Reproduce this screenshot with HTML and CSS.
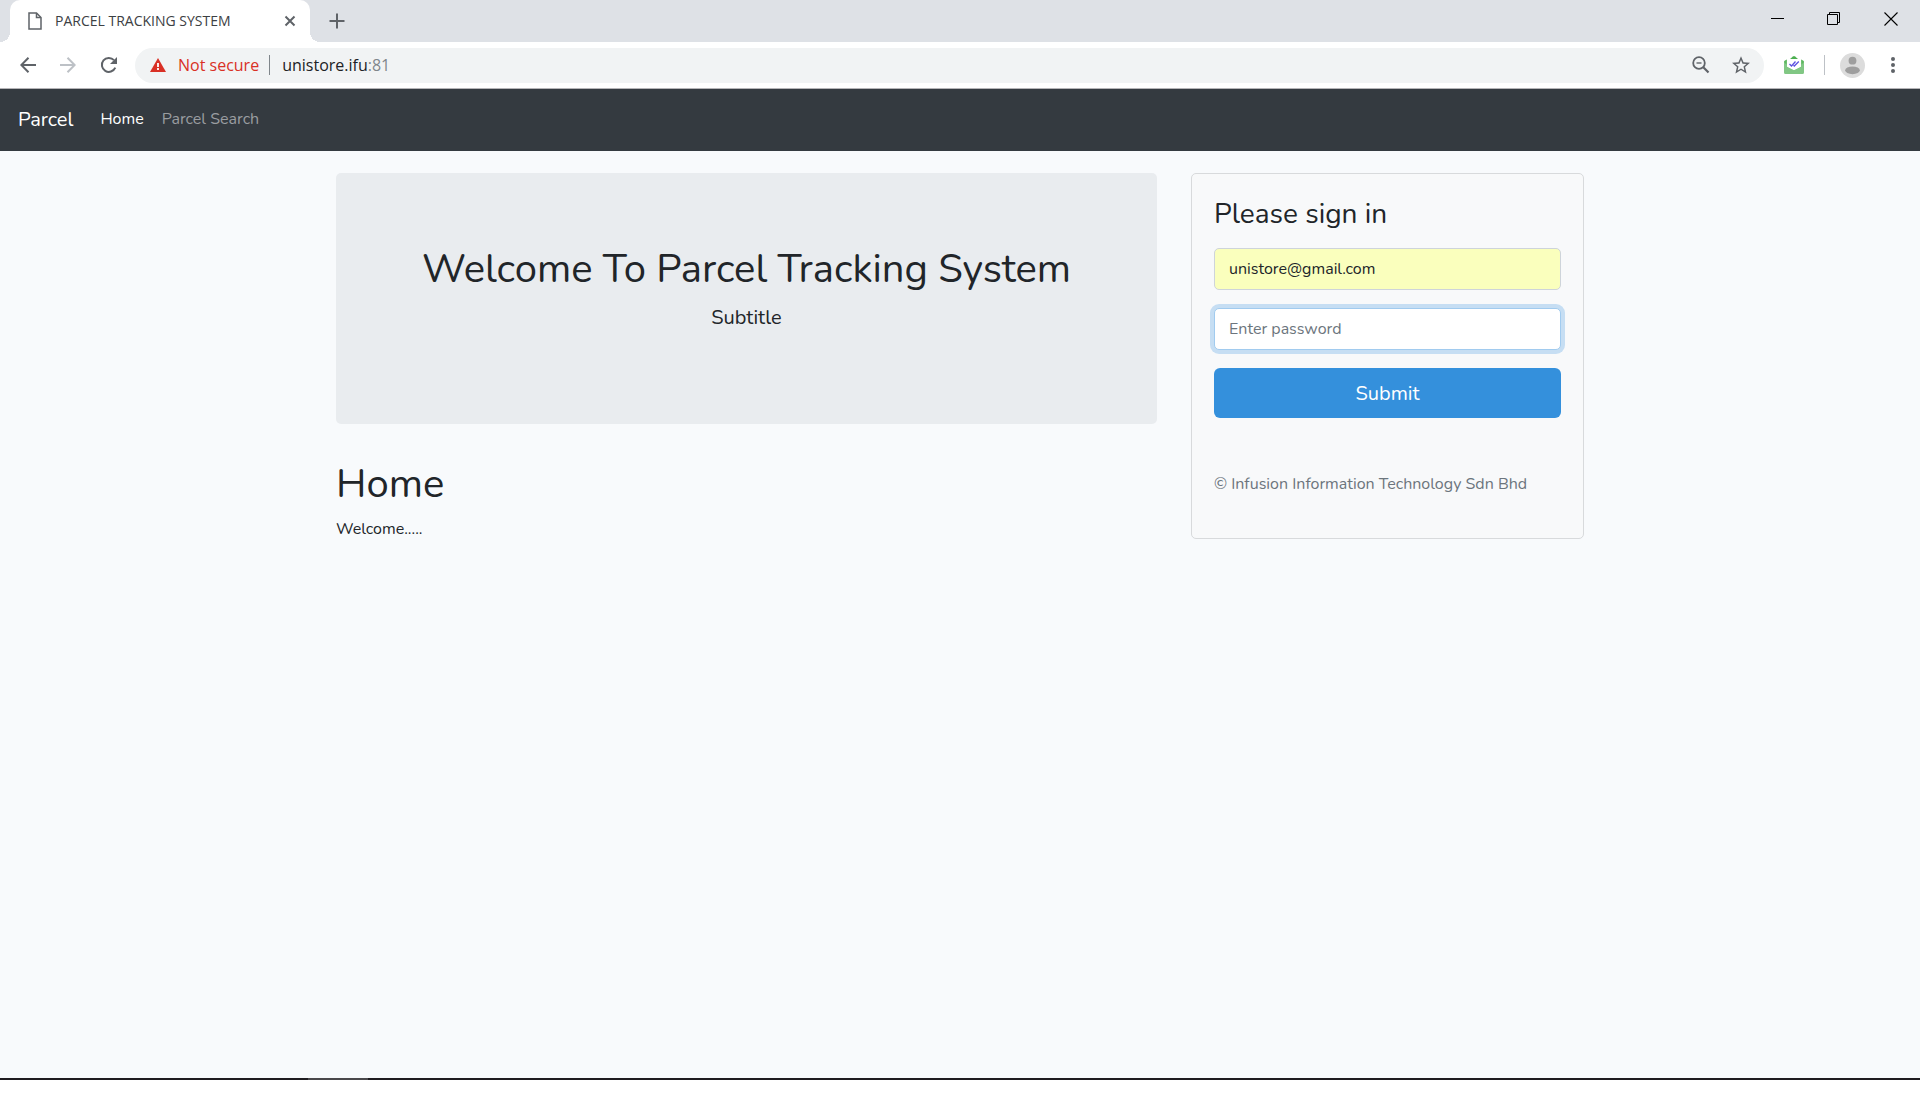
FILE: index.html
```html
<!DOCTYPE html>
<html lang="en">
<head>
    <meta charset="UTF-8">
    <meta name="viewport" content="width=device-width, initial-scale=1.0">
    <title>PARCEL TRACKING SYSTEM</title>
    <link rel="stylesheet" href="styles.css">
</head>
<body>
    <div class="window">
        <header class="browser">
            <div class="tab-strip">
                <div class="tab">
                    <svg class="tab-icon" width="14" height="18" viewBox="0 0 14 18" fill="none" stroke="#5f6368" stroke-width="1.5">
                        <path d="M1 1h7.5L13 5.500V17H1z"/>
                        <path d="M8.500 1v4.500H13"/>
                    </svg>
                    <span class="tab-title">PARCEL TRACKING SYSTEM</span>
                    <button type="button" class="icon-btn" aria-label="Close tab">
                        <svg width="12" height="12" viewBox="0 0 12 12" stroke="#5f6368" stroke-width="2"><path d="M1.500 1.500l9 9M10.500 1.500l-9 9"/></svg>
                    </button>
                </div>
                <button type="button" class="icon-btn new-tab" aria-label="New tab">
                    <svg width="16" height="16" viewBox="0 0 16 16" stroke="#5f6368" stroke-width="2"><path d="M8 .5v15M.5 8h15"/></svg>
                </button>
                <div class="window-controls">
                    <button type="button" class="icon-btn" aria-label="Minimize">
                        <svg width="14" height="14" viewBox="0 0 14 14"><path d="M1 6h13v1H1z" fill="#000"/></svg>
                    </button>
                    <button type="button" class="icon-btn" aria-label="Restore">
                        <svg width="14" height="14" viewBox="0 0 14 14" fill="none" stroke="#000"><path d="M.5 2.500h10v10H.500zM2.500 2.500v-2h10v10h-2"/></svg>
                    </button>
                    <button type="button" class="icon-btn" aria-label="Close">
                        <svg width="14" height="14" viewBox="0 0 14 14" stroke="#000" stroke-width="1.1"><path d="M.5.500l13 13M13.500.500l-13 13"/></svg>
                    </button>
                </div>
            </div>
            <div class="toolbar">
                <div class="nav-buttons">
                    <button type="button" class="icon-btn" aria-label="Back">
                        <svg width="16" height="16" viewBox="0 0 16 16" fill="none" stroke="#5f6368" stroke-width="2"><path d="M16 8H1.500M8.500.700L1.300 8l7.200 7.300"/></svg>
                    </button>
                    <button type="button" class="icon-btn" aria-label="Forward">
                        <svg width="16" height="16" viewBox="0 0 16 16" fill="none" stroke="#bdc1c6" stroke-width="2"><path d="M0 8h14.500M7.500.700L14.700 8l-7.200 7.300"/></svg>
                    </button>
                    <button type="button" class="icon-btn" aria-label="Reload">
                        <svg width="18" height="18" viewBox="0 0 18 18"><path d="M15.300 11.700A7 7 0 1 1 14 4.100" fill="none" stroke="#5f6368" stroke-width="2"/><path d="M17 1v7h-7z" fill="#5f6368"/></svg>
                    </button>
                </div>
                <div class="address-bar">
                    <svg width="16" height="14" viewBox="0 0 16 14"><path d="M8 0l8 14H0z" fill="#d93025"/><path d="M7.100 5h1.800v4H7.100zM7.100 10h1.800v2H7.100z" fill="#fff"/></svg>
                    <span class="not-secure">Not secure</span>
                    <span class="url">unistore.ifu<span class="port">:81</span></span>
                    <div class="address-actions">
                        <button type="button" class="icon-btn" aria-label="Zoom">
                            <svg width="18" height="18" viewBox="0 0 18 18" fill="none" stroke="#5f6368"><circle cx="7" cy="7" r="5.800" stroke-width="1.800"/><path d="M4.500 7h5" stroke-width="1.400"/><path d="M11.300 11.300l5.200 5.200" stroke-width="2.200"/></svg>
                        </button>
                        <button type="button" class="icon-btn" aria-label="Bookmark this page">
                            <svg width="18" height="18" viewBox="0 0 24 24" fill="#5f6368"><path d="M24 9.130l-8.630-.740L12 .4 8.630 8.400 0 9.130l6.550 5.680L4.580 23.300 12 18.800l7.420 4.500-1.970-8.490L24 9.130zM12 16.560l-4.510 2.730 1.200-5.130-3.980-3.450 5.250-.450L12 5.400l2.050 4.850 5.250.450-3.980 3.450 1.200 5.140L12 16.560z"/></svg>
                        </button>
                    </div>
                </div>
                <div class="toolbar-actions">
                    <button type="button" class="icon-btn" aria-label="Mail tracker">
                        <svg width="20" height="18" viewBox="0 0 20 18">
                            <path d="M6 3l3-2.500q1-.800 2 0L14 3z" fill="#4caf50"/>
                            <path d="M0 5l3-1.500v7l7 3.500 7-3.500v-7L20 5v11.500a1.500 1.500 0 0 1-1.500 1.500h-17A1.500 1.500 0 0 1 0 16.500z" fill="#81c784"/>
                            <path d="M0 6l2.500-2.500v5zM20 6l-2.500-2.500v5z" fill="#5cb85f"/>
                            <path d="M3 3h14v7.500L10 14l-7-3.500z" fill="#fff"/>
                            <path d="M5.500 8l2 2 4-4.500M9.500 9.200l.8.800L14.800 5.500" fill="none" stroke="#5b50e0" stroke-width="1.300"/>
                        </svg>
                    </button>
                    <span class="divider"></span>
                    <button type="button" class="icon-btn" aria-label="Profile">
                        <svg width="25" height="25" viewBox="0 0 25 25"><circle cx="12.500" cy="12.500" r="12.500" fill="#dcdcdc"/><circle cx="12.500" cy="7.700" r="3.900" fill="#9e9e9e"/><ellipse cx="12.500" cy="17.300" rx="7.300" ry="3.900" fill="#9e9e9e"/></svg>
                    </button>
                    <button type="button" class="icon-btn menu-btn" aria-label="Menu">
                        <svg width="4" height="16" viewBox="0 0 4 16" fill="#5f6368"><circle cx="2" cy="2" r="2"/><circle cx="2" cy="8" r="2"/><circle cx="2" cy="14" r="2"/></svg>
                    </button>
                </div>
            </div>
        </header>

        <div class="page">
            <nav class="navbar">
                <a class="navbar-brand" href="#">Parcel</a>
                <a class="nav-link active" href="#">Home</a>
                <a class="nav-link" href="#">Parcel Search</a>
            </nav>

            <main class="container">
                <div class="content">
                    <div class="jumbotron">
                        <h1>Welcome To Parcel Tracking System</h1>
                        <p class="lead">Subtitle</p>
                    </div>
                    <h1>Home</h1>
                    <p>Welcome.....</p>
                </div>

                <form class="card">
                    <h2>Please sign in</h2>
                    <input type="email" id="email" class="form-control autofilled" value="unistore@gmail.com" aria-label="Email">
                    <input type="password" id="password" class="form-control focused" placeholder="Enter password" aria-label="Password">
                    <button type="submit" class="submit-btn">Submit</button>
                    <p class="copyright">© Infusion Information Technology Sdn Bhd</p>
                </form>
            </main>
        </div>

        <div class="taskbar"><span class="taskbar-item"></span></div>
    </div>
</body>
</html>
```

FILE: styles.css
```css
* {
    margin: 0;
    padding: 0;
    box-sizing: border-box;
}

body {
    font-family: Nunito, Lato, sans-serif;
    font-size: 16px;
    line-height: 24px;
    color: #212529;
    background: #fff;
}

button {
    font-family: inherit;
    border: none;
    background: none;
    cursor: pointer;
}

a {
    text-decoration: none;
}

h1,
h2 {
    font-weight: 400;
}

h1 {
    font-size: 40px;
    line-height: 48px;
    margin-bottom: 9px;
}

.window {
    display: flex;
    flex-direction: column;
    min-height: 100vh;
    padding-bottom: 24px;
}

/* Browser chrome */
.browser {
    font-family: "Segoe UI", "Open Sans", sans-serif;
    border-bottom: 1px solid #b5b4b7;
}

.icon-btn {
    display: flex;
    align-items: center;
    justify-content: center;
}

.tab-strip {
    display: flex;
    height: 42px;
    padding-left: 10px;
    background: #dee1e6;
}

.tab {
    position: relative;
    display: flex;
    align-items: center;
    width: 300px;
    padding: 0 14px 0 18px;
    background: #fff;
    border-radius: 10px 10px 0 0;
}

/* curved feet of the active tab */
.tab::before,
.tab::after {
    content: "";
    position: absolute;
    bottom: 0;
    width: 10px;
    height: 10px;
}

.tab::before {
    right: 100%;
    background: radial-gradient(circle at 0 0, transparent 10px, #fff 10px);
}

.tab::after {
    left: 100%;
    background: radial-gradient(circle at 100% 0, transparent 10px, #fff 10px);
}

.tab-title {
    flex: 1;
    margin-left: 13px;
    font-size: 14px;
    color: #3c4043;
}

.new-tab {
    margin-left: 19px;
}

.window-controls {
    display: flex;
    gap: 43px;
    margin-left: auto;
    padding: 0 22px 5px 0;
}

.toolbar {
    display: flex;
    align-items: center;
    height: 46px;
    padding: 0 25px 0 20px;
}

.nav-buttons {
    display: flex;
    gap: 24px;
}

.address-bar {
    display: flex;
    flex: 1;
    align-items: center;
    height: 35px;
    margin-left: 17px;
    padding: 0 14px 0 15px;
    font-size: 16px;
    background: #f1f3f4;
    border-radius: 18px;
}

.not-secure {
    margin-left: 12px;
    padding-right: 10px;
    line-height: 20px;
    color: #d93025;
    border-right: 1px solid #80868b;
}

.url {
    padding-left: 12px;
    color: #202124;
}

.port {
    color: #80868b;
}

.address-actions {
    display: flex;
    gap: 22px;
    margin-left: auto;
}

.toolbar-actions {
    display: flex;
    align-items: center;
    margin-left: 20px;
    gap: 15px;
}

.divider {
    width: 1px;
    height: 20px;
    margin-left: 5px;
    background: #bdc1c6;
}

.menu-btn {
    margin-left: 11px;
}

/* Page */
.page {
    flex: 1;
    background: #f8fafc;
}

.navbar {
    display: flex;
    align-items: center;
    gap: 18px;
    height: 62px;
    padding: 0 18px;
    background: #343a40;
}

.navbar-brand {
    margin-right: 9px;
    font-size: 20px;
    color: #fff;
}

.nav-link {
    padding-bottom: 2px;
    color: #9a9da0;
}

.nav-link.active {
    color: #fff;
}

.container {
    display: grid;
    grid-template-columns: 821fr 393fr;
    gap: 34px;
    align-items: start;
    max-width: 1284px;
    margin: 0 auto;
    padding: 22px 18px;
}

.jumbotron {
    padding: 72px 36px;
    margin-bottom: 36px;
    text-align: center;
    background: #e9ecef;
    border-radius: 5px;
}

.lead {
    margin-bottom: 18px;
    font-size: 20px;
    line-height: 32px;
}

.card {
    display: flex;
    flex-direction: column;
    padding: 22px;
    background: #f8f9fa;
    border: 1px solid #d8dadc;
    border-radius: 5px;
}

.card h2 {
    margin-bottom: 16px;
    font-size: 28px;
    line-height: 36px;
}

.form-control {
    width: 100%;
    height: 42px;
    margin-bottom: 18px;
    padding: 0 14px;
    font-family: inherit;
    font-size: 16px;
    color: #212529;
    background: #fff;
    border: 1px solid #ced4da;
    border-radius: 5px;
}

.form-control::placeholder {
    color: #6c757d;
}

.form-control.autofilled {
    background: #faffbd;
}

.form-control.focused,
.form-control:focus {
    outline: none;
    border-color: #a1cbef;
    box-shadow: 0 0 0 4px #c6def3;
}

.submit-btn {
    height: 50px;
    font-size: 20px;
    color: #fff;
    background: #3490dc;
    border-radius: 6px;
}

.copyright {
    margin: 54px 0 20px;
    color: #6c757d;
}

.taskbar {
    height: 2px;
    padding-left: 308px;
    background: #1f1c20;
}

.taskbar-item {
    display: block;
    width: 60px;
    height: 2px;
    background: #4a484b;
}
```
